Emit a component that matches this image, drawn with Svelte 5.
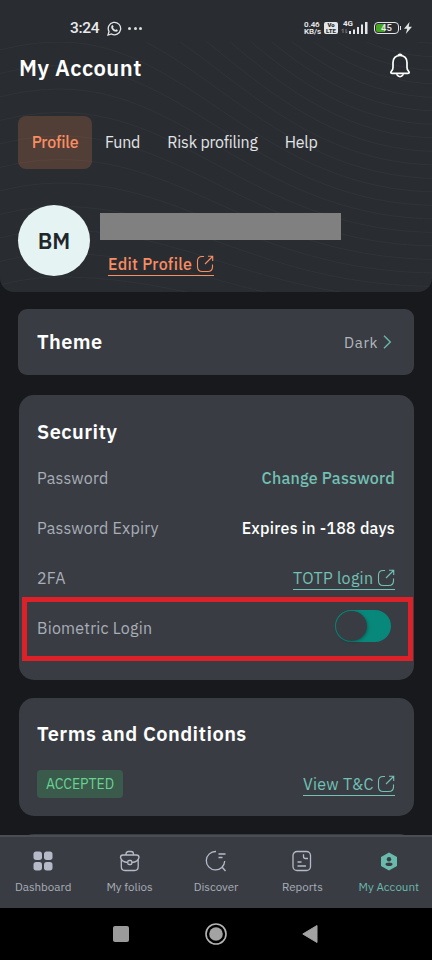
<script lang="ts">
    let activeTab = $state("Profile");
    let activeNav = $state("My Account");
    let biometric = $state(true);

    const tabs = ["Profile", "Fund", "Risk profiling", "Help"];
    const navItems = ["Dashboard", "My folios", "Discover", "Reports", "My Account"];

    // contour lines behind the header
    const contours = Array.from({ length: 23 }, (_, k) => {
        const a = -240 + 23.5 * k;
        const b = 30 + 13.5 * k;
        return `M-20 ${a + 14}Q20 ${a} 60 ${a}C190 ${a} 260 ${b} 440 ${b}`;
    });
</script>

{#snippet external()}
    <svg class="external" width="18" height="18" viewBox="0 0 18 18">
        <path d="M8 1.5H6.2Q1.5 1.5 1.5 6.2V11.8Q1.5 16.5 6.2 16.5H11.8Q16.5 16.5 16.5 11.8V9.5M9 9 16.5 1.5M12 1.3H16.7V6" />
    </svg>
{/snippet}

<div class="phone">
    <header>
        <svg class="contours" width="432" height="250" viewBox="0 42 432 250">
            {#each contours as d}
                <path {d} />
            {/each}
        </svg>

        <div class="status">
            <span class="time">3:24</span>
            <svg class="whatsapp" width="15" height="15" viewBox="0 0 15 15">
                <path d="M1 14 2 10.5A6.2 6.2 0 1 1 4.5 13Z" fill="none" stroke="#e4e5e6" stroke-width="1.3" />
                <path d="M4.7 4.5Q5.5 3.4 6 4.4L6.6 5.7 6 6.7Q6.8 8.3 8.4 9L9.3 8.2 10.8 9Q11 10.5 9.2 10.8C6.4 10.8 4 7.8 4.2 5.8Z" fill="#e4e5e6" />
            </svg>
            <span class="dots"><i></i><i></i><i></i></span>
            <span class="speed">0.46<br />KB/s</span>
            <span class="volte">Vo<br />LTE</span>
            <span class="network">
                <b>4G</b>
                <svg width="27" height="14" viewBox="0 0 27 14">
                    <path d="M2 12V8M.5 9.3 2 7.8M5 8V12M6.5 10.7 5 12.2" stroke="#777a7e" fill="none" />
                    <path d="M8 10h2v3H8zM12 8.5h2V13h-2zM16 6h2v7h-2zM20 3.5h2V13h-2zM24 1h2.5v12H24z" fill="#e4e5e6" />
                </svg>
            </span>
            <span class="battery"><span class="level"></span><b>45</b></span>
            <svg class="bolt" width="8" height="12" viewBox="0 0 8 12"><path d="M5.5 0 0 6.7H3.2L1.8 12 8 4.7H4.7Z" fill="#e4e5e6" /></svg>
        </div>

        <div class="title">
            <h1>My Account</h1>
            <svg width="22" height="26" viewBox="0 0 22 26">
                <path d="M11 2.5C6.5 2.5 4 5.3 4 9.5V14.5Q4 16.5 2.6 18Q.8 20.3 3 20.3H19Q21.2 20.3 19.4 18Q18 16.5 18 14.5V9.5C18 5.3 15.5 2.5 11 2.5Z" fill="none" stroke="#fff" stroke-width="1.7" />
                <path d="M9 2.2Q11 .2 13 2.2M7.5 21.3Q11 26 14.5 21.3" fill="none" stroke="#fff" stroke-width="1.5" />
            </svg>
        </div>

        <nav class="tabs">
            {#each tabs as tab}
                <button class={{ active: activeTab === tab }} onclick={() => (activeTab = tab)}>{tab}</button>
            {/each}
        </nav>

        <div class="user">
            <div class="avatar">BM</div>
            <div class="details">
                <div class="name"></div>
                <a class="link edit" href="#edit"><span>Edit Profile</span>{@render external()}</a>
            </div>
        </div>
    </header>

    <main>
        <section class="card theme">
            <h2>Theme</h2>
            <span class="mode">Dark</span>
            <svg width="9" height="14" viewBox="0 0 9 14"><path d="M1 .8 7.3 7 1 13.2" fill="none" stroke="#67b8aa" stroke-width="1.4" /></svg>
        </section>

        <section class="card security">
            <h2>Security</h2>
            <div class="row">
                <span class="key">Password</span>
                <a class="change" href="#password">Change Password</a>
            </div>
            <div class="row">
                <span class="key">Password Expiry</span>
                <span class="expires">Expires in -188 days</span>
            </div>
            <div class="row">
                <span class="key">2FA</span>
                <a class="link totp" href="#totp"><span>TOTP login</span>{@render external()}</a>
            </div>
            <div class="row biometric">
                <span class="key">Biometric Login</span>
                <label class="toggle">
                    <input type="checkbox" role="switch" aria-label="Biometric Login" bind:checked={biometric} />
                    <span class="knob"></span>
                </label>
            </div>
        </section>

        <section class="card terms">
            <h2>Terms and Conditions</h2>
            <div class="row">
                <span class="badge">ACCEPTED</span>
                <a class="link view" href="#terms"><span>View T&amp;C</span>{@render external()}</a>
            </div>
        </section>

        <section class="card next"></section>
    </main>

    <nav class="bottom">
        {#each navItems as item, i}
            <button class={["item", { active: activeNav === item }]} onclick={() => (activeNav = item)}>
                <svg width="22" height="22" viewBox="0 0 22 22">
                    {#if i === 0}
                        <g fill="#b6bac8">
                            <rect x="1.5" y="1.5" width="8.5" height="8.5" rx="2.7" />
                            <rect x="12" y="1.5" width="8.5" height="8.5" rx="2.7" />
                            <rect x="1.5" y="12" width="8.5" height="8.5" rx="2.7" />
                            <rect x="12" y="12" width="8.5" height="8.5" rx="2.7" />
                        </g>
                    {:else if i === 1}
                        <path d="M4 5H17.5Q20 5 20 7.500Q19 12 12.800 12.500M8.800 12.500Q2.500 12 1.500 7.500Q1.500 5 4 5M2.300 10V16.500Q2.300 20.500 6 20.500H15.500Q19.200 20.500 19.200 16.500V10M7 5V4.200Q7 1.500 9.500 1.500H12Q14.500 1.500 14.500 4.200V5" />
                        <rect class="cut" x="8.800" y="10.500" width="4" height="4" rx="1.200" />
                    {:else if i === 2}
                        <path d="M11 1.500A9.200 9.200 0 1 0 19.700 11M17 17 20.500 21M13.500 4H20.500M13.500 7.500H17.500" />
                    {:else if i === 3}
                        <rect x="2" y="1.500" width="17.500" height="19" rx="4" />
                        <path d="M12.500 4.200V6.500Q12.500 8.500 14.500 8.500H17M6.500 12H10.500M6.500 16H15" />
                    {:else}
                        <path class="solid" d="M11 2.500 19 7V16L11 20.500 3 16V7Z" />
                        <circle class="hole" cx="11" cy="9.300" r="2.200" />
                        <ellipse class="hole" cx="11" cy="14.300" rx="3.500" ry="1.800" />
                    {/if}
                </svg>
                <span>{item}</span>
            </button>
        {/each}
    </nav>

    <div class="system">
        <svg width="18" height="18" viewBox="0 0 18 18"><rect x="1" y="1" width="16" height="16" rx="2" fill="#9b9b9b" /></svg>
        <svg width="24" height="24" viewBox="0 0 24 24">
            <circle cx="12" cy="12" r="10" fill="none" stroke="#b5b5b5" stroke-width="1.6" />
            <circle cx="12" cy="12" r="6.8" fill="#a3a3a3" />
        </svg>
        <svg width="16" height="20" viewBox="0 0 16 20"><path d="M.8 10 15 1.500V18.500Z" fill="#a3a3a3" stroke="#a3a3a3" stroke-linejoin="round" /></svg>
    </div>
</div>

<style>
    :global(body) {
        margin: 0;
        background: #18191d;
    }

    .phone {
        width: 432px;
        height: 960px;
        display: flex;
        flex-direction: column;
        overflow: hidden;
        background: #18191d;
        color: #fff;
        font-family: "IBM Plex Sans", Roboto, sans-serif;
    }

    button {
        border: 0;
        padding: 0;
        background: none;
        color: inherit;
        font: inherit;
        letter-spacing: inherit;
        cursor: pointer;
    }

    h1, h2 {
        margin: 0;
        font-weight: 600;
    }

    a {
        text-decoration: none;
    }

    header {
        position: relative;
        flex: none;
        box-sizing: border-box;
        height: 292px;
        border-radius: 0 0 14px 14px;
        background: #292c31;
        overflow: hidden;
    }

    .contours {
        position: absolute;
        left: 0;
        top: 42px;
    }

    .contours path {
        fill: none;
        stroke: #303438;
        stroke-width: 1;
    }

    .status {
        position: relative;
        display: flex;
        align-items: center;
        height: 42px;
        padding: 14px 0 0 70px;
        box-sizing: border-box;
        color: #e9eaeb;
        font-family: Roboto, sans-serif;
    }

    .time {
        width: 37px;
        font-size: 15.5px;
        font-weight: 500;
        letter-spacing: -0.3px;
    }

    .dots {
        display: flex;
        gap: 2.5px;
        margin-left: 6px;
        width: 176px;
    }

    .dots i {
        width: 3px;
        height: 3px;
        border-radius: 50%;
        background: #dcddde;
    }

    .speed {
        width: 20px;
        font-size: 8px;
        line-height: 7.5px;
        font-weight: 600;
        letter-spacing: -0.1px;
        white-space: nowrap;
    }

    .volte {
        width: 14px;
        height: 12px;
        border-radius: 2px;
        background: #e4e5e6;
        color: #292c31;
        font-size: 6px;
        line-height: 6px;
        font-weight: 900;
        text-align: center;
    }

    .network {
        position: relative;
        width: 27px;
        height: 14px;
        margin-left: 3px;
    }

    .network b {
        position: absolute;
        left: 2px;
        top: -1px;
        font-size: 8px;
        line-height: 8px;
    }

    .network svg {
        display: block;
    }

    .battery {
        position: relative;
        box-sizing: border-box;
        width: 25px;
        height: 12px;
        margin-left: 6px;
        padding: 1px;
        border: 1px solid #e4e5e6;
        border-radius: 4px;
    }

    .battery::after {
        content: "";
        position: absolute;
        right: -3px;
        top: 3px;
        width: 1px;
        height: 4px;
        background: #e4e5e6;
    }

    .level {
        display: block;
        width: 45%;
        height: 8px;
        border-radius: 2px 0 0 2px;
        background: #48a51f;
    }

    .battery b {
        position: absolute;
        inset: 0;
        font-size: 9.5px;
        line-height: 10px;
        font-weight: 500;
        text-align: center;
    }

    .bolt {
        margin-left: 5px;
    }

    .title {
        position: relative;
        display: flex;
        justify-content: space-between;
        align-items: center;
        height: 50px;
        padding: 0 21px 0 19px;
    }

    .title svg {
        margin-top: -3px;
    }

    h1 {
        font-size: 22px;
        letter-spacing: 0.45px;
    }

    .tabs {
        position: relative;
        display: flex;
        align-items: center;
        height: 53px;
        margin: 24px 0 0 18px;
        font-size: 16px;
        letter-spacing: -0.2px;
        color: #e3e4e6;
    }

    .tabs button {
        margin: -2px 27px 0 0;
        white-space: nowrap;
    }

    .tabs .active {
        width: 74px;
        height: 53px;
        margin: 0 13px 0 0;
        padding-bottom: 2px;
        border-radius: 8px;
        background: #f7875033;
        color: #fb8d62;
        font-weight: 500;
    }

    .user {
        position: relative;
        display: flex;
        gap: 10px;
        margin: 36px 0 0 18px;
    }

    .avatar {
        width: 72px;
        height: 71px;
        border-radius: 50%;
        background: #e6f3f3;
        color: #20262a;
        font-size: 22px;
        font-weight: 600;
        line-height: 71px;
        text-align: center;
    }

    .name {
        width: 241px;
        height: 27px;
        margin-top: 8px;
        background: #808080;
    }

    .link {
        display: inline-flex;
        align-items: center;
        height: 22px;
        border-bottom: 1px solid currentColor;
        color: #73c0b4;
        font-size: 16px;
        letter-spacing: 0.3px;
        white-space: nowrap;
    }

    .external {
        margin-left: auto;
        fill: none;
        stroke: currentColor;
        stroke-width: 1.1;
    }

    .edit {
        width: 106px;
        margin: 13px 0 0 8px;
        color: #fb8d62;
        font-weight: 500;
    }

    main {
        flex: none;
        height: 543px;
        padding: 17px 18px 0;
        box-sizing: border-box;
        overflow: hidden;
    }

    .card {
        box-sizing: border-box;
        padding: 0 18.5px;
        margin: 0 0.5px;
        border-radius: 15px;
        background: #393d43;
    }

    h2 {
        font-size: 20px;
        line-height: 24px;
        letter-spacing: 0.45px;
    }

    .theme {
        display: flex;
        align-items: center;
        height: 66px;
        margin: 0 0 20px;
        padding: 0 22px 0 19px;
        border-radius: 9px;
    }

    .mode {
        margin: 0 5px 0 auto;
        color: #b3b6bd;
        font-size: 15px;
        letter-spacing: 0.6px;
    }

    .security {
        height: 285px;
        margin-bottom: 18px;
        padding-top: 25px;
    }

    .row {
        position: relative;
        display: flex;
        align-items: center;
        justify-content: space-between;
        height: 50px;
        font-size: 16px;
        letter-spacing: 0.23px;
    }

    .security h2 {
        margin-bottom: 9px;
    }

    .key {
        color: #a9aeb8;
    }

    .change {
        color: #73c0b4;
        font-weight: 500;
    }

    .expires {
        font-weight: 500;
    }

    .totp {
        width: 102px;
    }

    .biometric::after {
        content: "";
        position: absolute;
        left: -15px;
        right: -18px;
        top: -6px;
        height: 54px;
        border: 5px solid #dc2228;
        pointer-events: none;
    }

    .toggle {
        box-sizing: border-box;
        width: 56px;
        height: 32px;
        margin: -4px 4px 0 0;
        padding: 1px;
        border-radius: 16px;
        background: #07887a;
        cursor: pointer;
    }

    .toggle input {
        position: absolute;
        opacity: 0;
        width: 0;
        height: 0;
    }

    .knob {
        display: block;
        width: 31px;
        height: 30px;
        border-radius: 50%;
        background: #393d43;
        box-shadow: 1px 1px 3px #0004;
    }

    .terms {
        height: 118px;
        margin-bottom: 18px;
        padding-top: 24px;
    }

    .terms .row {
        height: 28px;
        margin-top: 24px;
    }

    .badge {
        width: 86px;
        height: 28px;
        border-radius: 4px;
        background: #3a5a4c;
        color: #68d391;
        font-size: 14px;
        letter-spacing: 0;
        line-height: 28px;
        text-align: center;
    }

    .view {
        width: 92px;
    }

    .next {
        height: 40px;
    }

    .bottom {
        flex: none;
        display: grid;
        grid-template-columns: repeat(5, 1fr);
        box-sizing: border-box;
        height: 73px;
        border-top: 2px solid #4a4e54;
        background: #393d43;
        color: #a9aeb8;
    }

    .item {
        display: flex;
        flex-direction: column;
        align-items: center;
        padding-top: 13px;
        font-size: 11.6px;
        letter-spacing: 0;
        white-space: nowrap;
    }

    .item svg {
        fill: none;
        stroke: #b6bac8;
        stroke-width: 1.3;
    }

    .item g, .item .solid, .item .hole {
        stroke: none;
    }

    .item .cut, .item .hole {
        fill: #393d43;
    }

    .item .solid {
        fill: #69b9ad;
    }

    .item span {
        margin-top: 7px;
        line-height: 16px;
    }

    .item.active {
        color: #69b9ad;
    }

    .system {
        flex: none;
        display: flex;
        justify-content: center;
        align-items: center;
        gap: 74px;
        height: 52px;
        padding-right: 2px;
        background: #000;
    }
</style>
